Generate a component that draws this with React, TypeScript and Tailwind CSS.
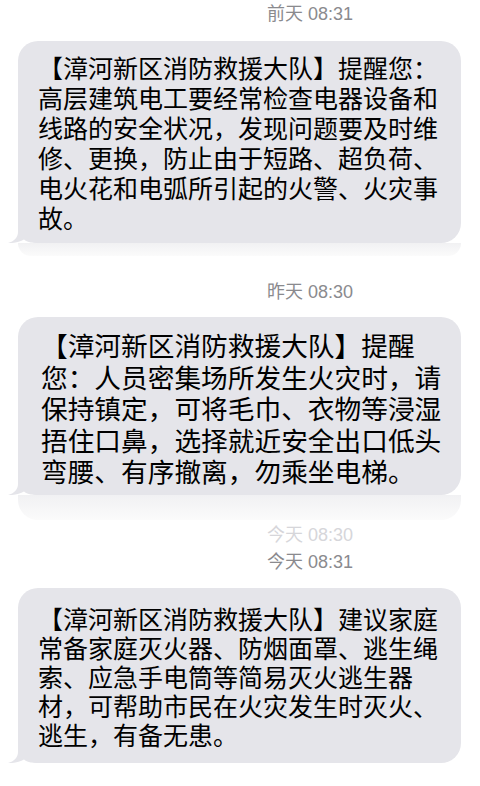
import React from "react";

const cjk = { fontFamily: '"Noto Sans CJK SC", "Noto Sans", sans-serif' };
const stamp = { fontFamily: '"Liberation Sans", "Noto Sans CJK SC", sans-serif' };

const messages = [
  {
    time: "前天 08:31",
    lines: [
      "【漳河新区消防救援大队】提醒您：",
      "高层建筑电工要经常检查电器设备和",
      "线路的安全状况，发现问题要及时维",
      "修、更换，防止由于短路、超负荷、",
      "电火花和电弧所引起的火警、火灾事",
      "故。",
    ],
  },
  {
    time: "昨天 08:30",
    lines: [
      "【漳河新区消防救援大队】提醒",
      "您：人员密集场所发生火灾时，请",
      "保持镇定，可将毛巾、衣物等浸湿",
      "捂住口鼻，选择就近安全出口低头",
      "弯腰、有序撤离，勿乘坐电梯。",
    ],
  },
  {
    time: "今天 08:31",
    lines: [
      "【漳河新区消防救援大队】建议家庭",
      "常备家庭灭火器、防烟面罩、逃生绳",
      "索、应急手电筒等简易灭火逃生器",
      "材，可帮助市民在火灾发生时灭火、",
      "逃生，有备无患。",
    ],
  },
];

const Tail = ({ color }: { color: string }) => (
  <svg
    className="absolute left-[-10px] bottom-0"
    width="30"
    height="24"
    viewBox="0 0 30 24"
  >
    <path
      d="M10 0 L10 13 C10 18.5 6 22.5 0 24 C6 24.4 12 23 16 20.6 C18.5 22.8 22 24 30 24 L30 0 Z"
      fill={color}
    />
  </svg>
);

const Bubble = ({
  lines,
  className,
  lineClass,
}: {
  lines: string[];
  className: string;
  lineClass: string;
}) => (
  <div className={`relative ml-[18px] w-[443px] rounded-[20px] bg-[#e5e5ea] ${className}`}>
    <Tail color="#e5e5ea" />
    <div className="relative text-black" style={cjk}>
      {lines.map((line, i) => (
        <div key={`line_${i}`} className={`whitespace-nowrap ${lineClass}`}>
          {line}
        </div>
      ))}
    </div>
  </div>
);

const Stamp = ({ text, faded }: { text: string; faded?: boolean }) => (
  <div
    className={`h-[28px] pl-[267px] text-[18px] leading-[28px] ${
      faded ? "text-[#d6d6da]" : "text-[#8a8a8e]"
    }`}
    style={stamp}
  >
    {text}
  </div>
);

const Ghost = ({ className }: { className: string }) => (
  <div
    className={`ml-[18px] w-[443px] rounded-b-[20px] bg-gradient-to-b from-[#f1f1f3] to-[#fbfbfb] ${className}`}
  ></div>
);

export default function App() {
  return (
    <div className="flex h-[786px] w-[480px] flex-col overflow-hidden bg-white">
      <Stamp text={messages[0].time} />
      <Bubble
        lines={messages[0].lines}
        className="mt-[13px] pt-[11px] pb-[11px] pl-[20px]"
        lineClass="text-[25px] leading-[30px]"
      />
      <Ghost className="h-[13px]" />

      <div className="mt-[22px]">
        <Stamp text={messages[1].time} />
      </div>
      <Bubble
        lines={messages[1].lines}
        className="mt-[11px] pt-[12px] pb-[8.5px] pl-[23px]"
        lineClass="text-[26.7px] leading-[31.5px]"
      />
      <Ghost className="h-[25px]" />

      <div className="mt-[1px] h-[27px] overflow-hidden">
        <Stamp text="今天 08:30" faded />
      </div>
      <Stamp text={messages[2].time} />
      <Bubble
        lines={messages[2].lines}
        className="mt-[12px] pt-[16px] pb-[14px] pl-[20px]"
        lineClass="text-[25px] leading-[29px]"
      />
    </div>
  );
}
